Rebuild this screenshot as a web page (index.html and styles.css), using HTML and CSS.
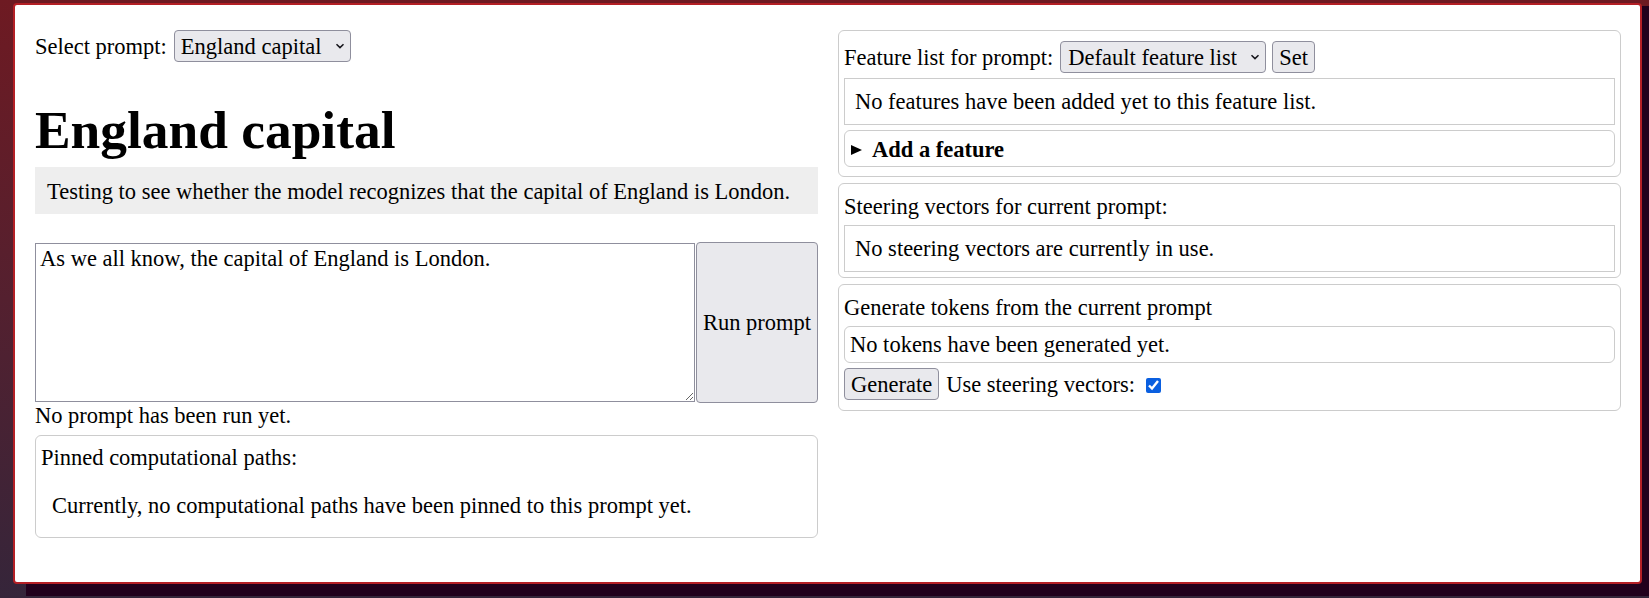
FILE: index.html
```html
<!DOCTYPE html>
<html lang="en">
<head>
<meta charset="utf-8">
<title>England capital</title>
<link rel="stylesheet" href="styles.css">
</head>
<body>
<div class="backdrop"></div>
<div class="window">
  <div class="col col-left">
    <div class="picker-row">
      <label class="picker-label" for="prompt-select">Select prompt:</label>
      <span class="select-wrap">
        <select class="select" id="prompt-select"><option>England capital</option></select>
        <svg class="chev" width="10" height="6" viewBox="0 0 10 6"><path d="M1.5 1.2 L5 4.6 L8.5 1.2" fill="none" stroke="#15141a" stroke-width="1.5"/></svg>
      </span>
    </div>
    <h1 class="title">England capital</h1>
    <div class="description">Testing to see whether the model recognizes that the capital of England is London.</div>
    <div class="editor-row">
      <textarea class="prompt-input">As we all know, the capital of England is London.</textarea>
      <button class="btn btn-run">Run prompt</button>
    </div>
    <div class="run-status">No prompt has been run yet.</div>
    <div class="panel pinned">
      <div class="panel-title">Pinned computational paths:</div>
      <p class="pinned-empty">Currently, no computational paths have been pinned to this prompt yet.</p>
    </div>
  </div>
  <div class="col col-right">
    <div class="panel panel-features">
      <div class="feature-row">
        <span class="picker-label">Feature list for prompt:</span>
        <span class="select-wrap">
          <select class="select select-features"><option>Default feature list</option></select>
          <svg class="chev" width="10" height="6" viewBox="0 0 10 6"><path d="M1.5 1.2 L5 4.6 L8.5 1.2" fill="none" stroke="#15141a" stroke-width="1.5"/></svg>
        </span>
        <button class="btn">Set</button>
      </div>
      <div class="info-box">No features have been added yet to this feature list.</div>
      <details class="add-feature">
        <summary class="add-summary"><span class="caret"></span>Add a feature</summary>
      </details>
    </div>
    <div class="panel">
      <div class="panel-title">Steering vectors for current prompt:</div>
      <div class="info-box">No steering vectors are currently in use.</div>
    </div>
    <div class="panel panel-generate">
      <div class="panel-title">Generate tokens from the current prompt</div>
      <div class="tokens-box">No tokens have been generated yet.</div>
      <div class="generate-row">
        <button class="btn">Generate</button>
        <label class="steer-label" for="use-steer">Use steering vectors:</label>
        <input class="steer-check" id="use-steer" type="checkbox" checked>
      </div>
    </div>
  </div>
</div>
</body>
</html>
```
FILE: styles.css
```css
* {
  box-sizing: border-box;
}

html,
body {
  margin: 0;
  height: 100%;
}

body {
  position: relative;
  overflow: hidden;
  background: linear-gradient(180deg, #6e1a22 0%, #54202f 50%, #35253a 100%);
  font-family: "Liberation Serif", "Times New Roman", serif;
  font-size: 22.5px;
  line-height: 25px;
  color: #000;
}

.backdrop {
  position: absolute;
  left: 26px;
  top: 6px;
  right: 0;
  bottom: 2px;
  background: #22001c;
}

.window {
  position: relative;
  margin: 3px 0 0 13px;
  width: 1629px;
  height: 581px;
  border: 2px solid #b41f25;
  border-radius: 4px;
  background: #fff;
  display: grid;
  grid-template-columns: 1fr 1fr;
  column-gap: 20px;
  align-items: start;
  padding: 25px 19px 0 20px;
}

.col-right {
  display: flex;
  flex-direction: column;
  gap: 6px;
}

.picker-row,
.feature-row {
  display: flex;
  align-items: center;
  height: 32px;
}

.picker-label {
  margin-right: 7px;
}

.select-wrap {
  position: relative;
  display: inline-flex;
}

.select {
  appearance: none;
  -webkit-appearance: none;
  font: inherit;
  line-height: 25px;
  height: 32px;
  padding: 0 28px 0 6px;
  border: 1px solid #8f8f9d;
  border-radius: 4px;
  background: #e9e9ed;
  color: #000;
}

.select-features {
  padding-left: 7px;
}

.chev {
  position: absolute;
  right: 6px;
  top: 13px;
  pointer-events: none;
}

.btn {
  font: inherit;
  line-height: 25px;
  height: 32px;
  padding: 0 6px;
  border: 1px solid #8f8f9d;
  border-radius: 4px;
  background: #e9e9ed;
  color: #000;
  white-space: nowrap;
}

.feature-row .btn {
  margin-left: 6px;
}

.title {
  font-size: 53.4px;
  line-height: 59px;
  font-weight: bold;
  margin: 39px 0 7px;
}

.description {
  background: #eeeeee;
  padding: 12px 12px 10px;
}

.editor-row {
  display: flex;
  gap: 1px;
  margin-top: 28px;
}

.prompt-input {
  flex: 1;
  min-width: 0;
  height: 159px;
  margin: 1px 0;
  font: inherit;
  line-height: 25px;
  padding: 2px 4px;
  border: 1px solid #8f8f9d;
  border-radius: 0;
  color: #000;
  resize: both;
}

.btn-run {
  height: auto;
  width: 122px;
  flex: 0 0 122px;
  padding: 0 2px;
}

.panel {
  border: 1px solid #cccccc;
  border-radius: 6px;
  padding: 5px;
}

.panel-features {
  padding-bottom: 9px;
}

.pinned {
  margin-top: 7px;
  padding: 9px 5px 0;
}

.pinned-empty {
  margin: 23px 0 19px 11px;
}

.col-right .panel-title {
  margin-top: 5px;
}

.feature-row {
  margin-top: 5px;
}

.info-box {
  border: 1px solid #cccccc;
  padding: 10px;
  margin-top: 6px;
}

.feature-row + .info-box {
  margin-top: 5px;
}

.add-feature {
  border: 1px solid #cccccc;
  border-radius: 6px;
  padding: 6px 5px 4px;
  margin-top: 5px;
}

.add-summary {
  list-style: none;
  display: flex;
  align-items: center;
  font-weight: bold;
  cursor: pointer;
}

.add-summary::-webkit-details-marker {
  display: none;
}

.caret {
  width: 0;
  height: 0;
  border-left: 11px solid #000;
  border-top: 5.5px solid transparent;
  border-bottom: 5.5px solid transparent;
  margin: 1px 10px 0 1px;
}

.panel-generate {
  padding-bottom: 10px;
}

.tokens-box {
  border: 1px solid #cccccc;
  border-radius: 6px;
  padding: 5px;
  margin-top: 6px;
}

.generate-row {
  display: flex;
  align-items: center;
  margin-top: 5px;
}

.steer-label {
  margin-left: 7px;
}

.steer-check {
  width: 15px;
  height: 15px;
  margin: 2px 0 0 11px;
  accent-color: #0a5fe0;
}
```
